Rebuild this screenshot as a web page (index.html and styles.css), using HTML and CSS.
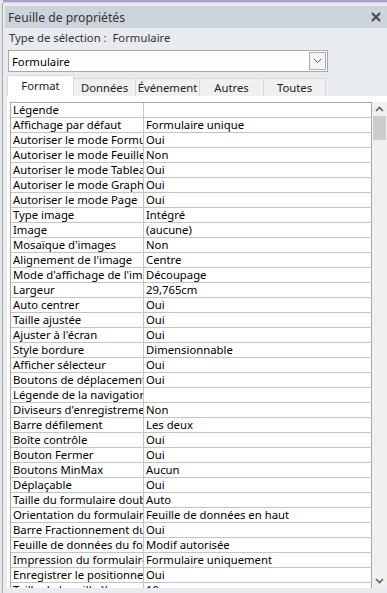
FILE: index.html
```html
<!DOCTYPE html>
<html lang="fr">
<head>
    <meta charset="UTF-8">
    <meta name="viewport" content="width=device-width, initial-scale=1.0">
    <title>Feuille de propriétés</title>
    <link rel="stylesheet" href="styles.css">
</head>
<body>
    <div class="topline"></div>
    <div class="frame">
        <div class="titlebar">
            <span>Feuille de propriétés</span>
            <svg class="close" width="10" height="10" viewBox="0 0 10 10">
                <path d="M1 1 L9 9 M9 1 L1 9" stroke="#4a4a4a" stroke-width="2.2" fill="none"/>
            </svg>
        </div>
        <div class="panel">
            <div class="seltype">Type de sélection :&nbsp; Formulaire</div>
            <div class="combo">
                <span class="combo-text">Formulaire</span>
                <span class="combo-btn">
                    <svg width="9" height="6" viewBox="0 0 9 6">
                        <path d="M1 1 L4.5 4.5 L8 1" stroke="#555" stroke-width="1" fill="none"/>
                    </svg>
                </span>
            </div>
            <div class="tabs">
                <div class="tab active">Format</div>
                <div class="tab">Données</div>
                <div class="tab">Événement</div>
                <div class="tab">Autres</div>
                <div class="tab">Toutes</div>
            </div>
            <div class="sheet">
                <div class="grid">
                    <div class="name">Légende</div><div class="value"></div>
                    <div class="name">Affichage par défaut</div><div class="value">Formulaire unique</div>
                    <div class="name">Autoriser le mode Formulaire</div><div class="value">Oui</div>
                    <div class="name">Autoriser le mode Feuille de données</div><div class="value">Non</div>
                    <div class="name">Autoriser le mode Tableau croisé</div><div class="value">Oui</div>
                    <div class="name">Autoriser le mode Graphique croisé</div><div class="value">Oui</div>
                    <div class="name">Autoriser le mode Page</div><div class="value">Oui</div>
                    <div class="name">Type image</div><div class="value">Intégré</div>
                    <div class="name">Image</div><div class="value">(aucune)</div>
                    <div class="name">Mosaïque d'images</div><div class="value">Non</div>
                    <div class="name">Alignement de l'image</div><div class="value">Centre</div>
                    <div class="name">Mode d'affichage de l'image</div><div class="value">Découpage</div>
                    <div class="name">Largeur</div><div class="value">29,765cm</div>
                    <div class="name">Auto centrer</div><div class="value">Oui</div>
                    <div class="name">Taille ajustée</div><div class="value">Oui</div>
                    <div class="name">Ajuster à l'écran</div><div class="value">Oui</div>
                    <div class="name">Style bordure</div><div class="value">Dimensionnable</div>
                    <div class="name">Afficher sélecteur</div><div class="value">Oui</div>
                    <div class="name">Boutons de déplacement</div><div class="value">Oui</div>
                    <div class="name">Légende de la navigation</div><div class="value"></div>
                    <div class="name">Diviseurs d'enregistrement</div><div class="value">Non</div>
                    <div class="name">Barre défilement</div><div class="value">Les deux</div>
                    <div class="name">Boîte contrôle</div><div class="value">Oui</div>
                    <div class="name">Bouton Fermer</div><div class="value">Oui</div>
                    <div class="name">Boutons MinMax</div><div class="value">Aucun</div>
                    <div class="name">Déplaçable</div><div class="value">Oui</div>
                    <div class="name">Taille du formulaire double affichage</div><div class="value">Auto</div>
                    <div class="name">Orientation du formulaire double affichage</div><div class="value">Feuille de données en haut</div>
                    <div class="name">Barre Fractionnement du formulaire</div><div class="value">Oui</div>
                    <div class="name">Feuille de données du formulaire</div><div class="value">Modif autorisée</div>
                    <div class="name">Impression du formulaire double affichage</div><div class="value">Formulaire uniquement</div>
                    <div class="name">Enregistrer le positionnement</div><div class="value">Oui</div>
                    <div class="name">Taille de la grille X</div><div class="value">10</div>
                </div>
                <div class="scroll">
                    <svg class="arrow" width="9" height="6" viewBox="0 0 9 6">
                        <path d="M1 5 L4.5 1.5 L8 5" stroke="#606060" stroke-width="1.6" fill="none"/>
                    </svg>
                    <div class="thumb"></div>
                    <div class="track"></div>
                    <svg class="arrow" width="9" height="6" viewBox="0 0 9 6">
                        <path d="M1 1 L4.5 4.5 L8 1" stroke="#606060" stroke-width="1.6" fill="none"/>
                    </svg>
                </div>
            </div>
        </div>
    </div>
</body>
</html>
```

FILE: styles.css
```css
body {
    margin: 0;
    height: 593px;
    overflow: hidden;
    background-color: #e6e6e6;
    font-family: "Segoe UI", "Noto Sans", Arial, sans-serif;
    font-size: 11.3px;
    color: #1e1e1e;
}

.topline {
    height: 2px;
    margin-left: 3px;
    background-color: #a79dc9;
    border-bottom: 1px solid #d4cfe6;
}

.frame {
    margin-left: 2px;
    height: 590px;
    border-left: 1px solid #a6a9ad;
    padding-left: 2px;
    padding-top: 3px;
    background-color: #e8ebef;
    display: flex;
    flex-direction: column;
}

.titlebar {
    height: 22px;
    background-color: #cdd3db;
    display: flex;
    align-items: center;
    justify-content: space-between;
    padding: 0 6px 0 3px;
    font-size: 12.2px;
    color: #333;
}

.panel {
    flex: 1;
    display: flex;
    flex-direction: column;
    min-height: 0;
}

.seltype {
    height: 19px;
    line-height: 19px;
    padding-left: 4px;
    color: #333;
}

.combo {
    margin: 3px 0 0 3px;
    width: 318px;
    height: 20px;
    background-color: #fff;
    border: 1px solid #a9a9a9;
    display: flex;
    align-items: center;
    justify-content: space-between;
}

.combo-text {
    padding-left: 3px;
    color: #000;
}

.combo-btn {
    width: 15px;
    height: 16px;
    margin-right: 1px;
    border: 1px solid #acacac;
    background-color: #f4f4f4;
    display: flex;
    align-items: center;
    justify-content: center;
}

.tabs {
    margin: 4px 0 0 2px;
    height: 20px;
    display: flex;
    align-items: flex-end;
}

.tab {
    height: 17px;
    line-height: 17px;
    background-color: #f0f0f0;
    border: 1px solid #d9d9d9;
    border-bottom: none;
    margin-left: -1px;
    text-align: center;
    color: #222;
}

.tab:nth-child(2) { width: 61px; }
.tab:nth-child(3) { width: 63px; }
.tab:nth-child(4) { width: 63px; }
.tab:nth-child(5) { width: 61px; }

.tab.active {
    margin-left: 0;
    width: 65px;
    height: 20px;
    line-height: 20px;
    background-color: #fff;
    position: relative;
    z-index: 1;
}

.sheet {
    margin-left: 2px;
    height: 492px;
    background-color: #fff;
    display: flex;
    padding-top: 6px;
    padding-left: 3px;
    box-sizing: border-box;
    overflow: hidden;
}

.grid {
    width: 362px;
    display: grid;
    grid-template-columns: 133px 228px;
    grid-auto-rows: 15px;
    border-left: 1px solid #a8a8a8;
    border-top: 1px solid #a8a8a8;
    align-content: start;
}

.name, .value {
    border-right: 1px solid #c4c4c4;
    border-bottom: 1px solid #c4c4c4;
    padding-left: 2px;
    white-space: nowrap;
    overflow: hidden;
    line-height: 14px;
    color: #000;
}

.value {
    border-right-color: #a8a8a8;
}

.scroll {
    width: 15px;
    background-color: #f0f0f0;
    display: flex;
    flex-direction: column;
    align-items: center;
}

.arrow {
    margin: 4px 0;
}

.thumb {
    width: 13px;
    height: 24px;
    background-color: #cdcdcd;
}

.track {
    flex: 1;
}
```
